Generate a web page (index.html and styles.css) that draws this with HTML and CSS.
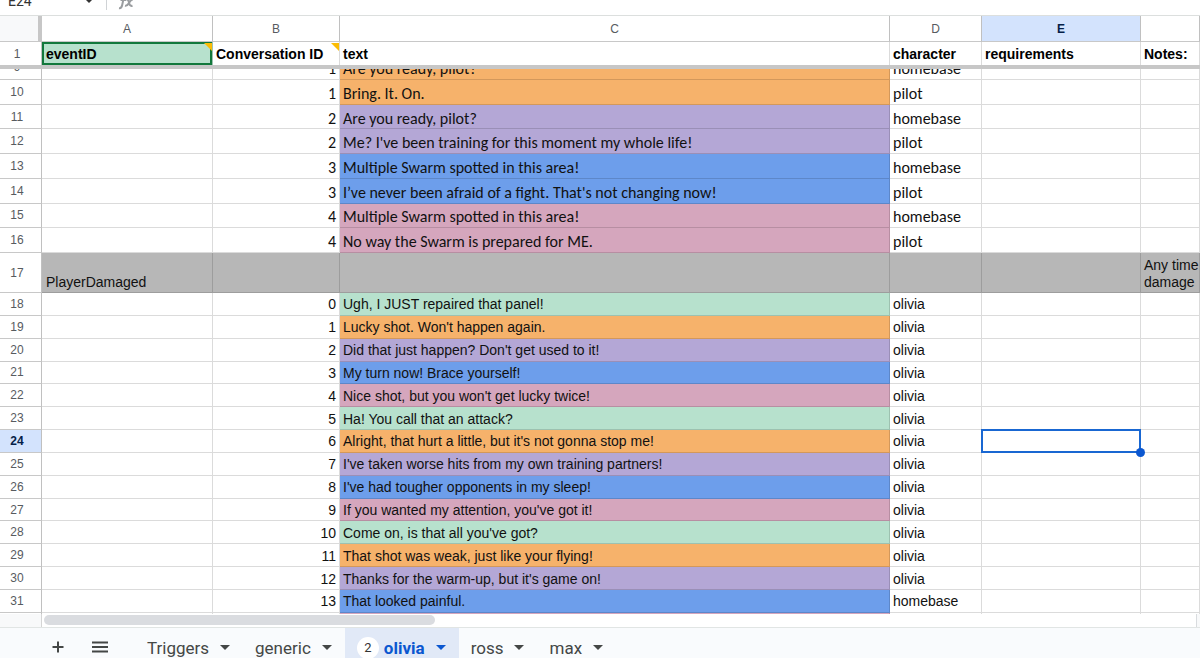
FILE: index.html
```html
<!DOCTYPE html>
<html lang="en">
<head>
<meta charset="utf-8">
<title>Dialogue sheet</title>
<link rel="stylesheet" href="styles.css">
</head>
<body>
<div class="formula-bar">
  <input class="name-box" type="text" value="E24" aria-label="Name box">
  <button class="name-menu" type="button" aria-label="Named ranges"><span class="caret"></span></button>
  <span class="divider"></span>
  <svg class="fx" viewBox="0 0 18 18" aria-hidden="true"><path d="M2 16.200c2.200.3 2.800-1 3.200-3.200L7 4.500C7.400 2.500 8.500 1.700 10.500 2M3.500 8h5.500M9 7.500c2-.5 2.500 1 3 3s1 4 3.500 3.200M16 7.500c-2-.2-3 2-4 3.500S10 14.300 8 13.800"/></svg>
</div>
<main class="sheet">
  <table class="grid frozen">
    <colgroup><col class="c-num"><col class="c-a"><col class="c-b"><col class="c-c"><col class="c-d"><col class="c-e"><col></colgroup>
    <thead>
      <tr class="letters"><th class="corner"></th><th>A</th><th>B</th><th>C</th><th>D</th><th class="active">E</th><th></th></tr>
    </thead>
    <tbody>
      <tr class="titles"><th>1</th><td class="event note">eventID</td><td class="note">Conversation ID</td><td>text</td><td>character</td><td>requirements</td><td>Notes:</td></tr>
    </tbody>
  </table>
  <div class="viewport">
    <table class="grid">
      <colgroup><col class="c-num"><col class="c-a"><col class="c-b"><col class="c-c"><col class="c-d"><col class="c-e"><col></colgroup>
      <tbody class="humanist first">
        <tr class="orange"><th>9</th><td></td><td>1</td><td>Are you ready, pilot?</td><td>homebase</td><td></td><td></td></tr>
      </tbody>
      <tbody class="humanist intro">
        <tr class="orange"><th>10</th><td></td><td>1</td><td>Bring. It. On.</td><td>pilot</td><td></td><td></td></tr>
        <tr class="purple"><th>11</th><td></td><td>2</td><td>Are you ready, pilot?</td><td>homebase</td><td></td><td></td></tr>
        <tr class="purple"><th>12</th><td></td><td>2</td><td>Me? I've been training for this moment my whole life!</td><td>pilot</td><td></td><td></td></tr>
        <tr class="blue"><th>13</th><td></td><td>3</td><td>Multiple Swarm spotted in this area!</td><td>homebase</td><td></td><td></td></tr>
        <tr class="blue"><th>14</th><td></td><td>3</td><td>I’ve never been afraid of a fight. That's not changing now!</td><td>pilot</td><td></td><td></td></tr>
        <tr class="pink"><th>15</th><td></td><td>4</td><td>Multiple Swarm spotted in this area!</td><td>homebase</td><td></td><td></td></tr>
        <tr class="pink"><th>16</th><td></td><td>4</td><td>No way the Swarm is prepared for ME.</td><td>pilot</td><td></td><td></td></tr>
      </tbody>
      <tbody>
        <tr class="section"><th>17</th><td>PlayerDamaged</td><td></td><td></td><td></td><td></td><td>Any time<br>damage</td></tr>
      </tbody>
      <tbody class="hits">
        <tr class="green"><th>18</th><td></td><td>0</td><td>Ugh, I JUST repaired that panel!</td><td>olivia</td><td></td><td></td></tr>
        <tr class="orange"><th>19</th><td></td><td>1</td><td>Lucky shot. Won't happen again.</td><td>olivia</td><td></td><td></td></tr>
        <tr class="purple"><th>20</th><td></td><td>2</td><td>Did that just happen? Don't get used to it!</td><td>olivia</td><td></td><td></td></tr>
        <tr class="blue"><th>21</th><td></td><td>3</td><td>My turn now! Brace yourself!</td><td>olivia</td><td></td><td></td></tr>
        <tr class="pink"><th>22</th><td></td><td>4</td><td>Nice shot, but you won't get lucky twice!</td><td>olivia</td><td></td><td></td></tr>
        <tr class="green"><th>23</th><td></td><td>5</td><td>Ha! You call that an attack?</td><td>olivia</td><td></td><td></td></tr>
        <tr class="orange"><th class="active">24</th><td></td><td>6</td><td>Alright, that hurt a little, but it's not gonna stop me!</td><td>olivia</td><td class="selected"></td><td></td></tr>
        <tr class="purple"><th>25</th><td></td><td>7</td><td>I've taken worse hits from my own training partners!</td><td>olivia</td><td></td><td></td></tr>
        <tr class="blue"><th>26</th><td></td><td>8</td><td>I've had tougher opponents in my sleep!</td><td>olivia</td><td></td><td></td></tr>
        <tr class="pink"><th>27</th><td></td><td>9</td><td>If you wanted my attention, you've got it!</td><td>olivia</td><td></td><td></td></tr>
        <tr class="green"><th>28</th><td></td><td>10</td><td>Come on, is that all you've got?</td><td>olivia</td><td></td><td></td></tr>
        <tr class="orange"><th>29</th><td></td><td>11</td><td>That shot was weak, just like your flying!</td><td>olivia</td><td></td><td></td></tr>
        <tr class="purple"><th>30</th><td></td><td>12</td><td>Thanks for the warm-up, but it's game on!</td><td>olivia</td><td></td><td></td></tr>
        <tr class="blue"><th>31</th><td></td><td>13</td><td>That looked painful.</td><td>homebase</td><td></td><td></td></tr>
      </tbody>
      <tbody>
        <tr class="pink next"><th></th><td></td><td></td><td></td><td></td><td></td><td></td></tr>
      </tbody>
    </table>
  </div>
  <div class="scroll-row">
    <div class="scroll-corner"></div>
    <div class="track"><div class="thumb"></div></div>
    <div class="scroll-end"></div>
  </div>
</main>
<nav class="tabs" aria-label="Sheets">
  <button class="tool" type="button" aria-label="Add sheet"><svg viewBox="0 0 18 18"><path d="M9 3.500v11M3.500 9h11"/></svg></button>
  <button class="tool" type="button" aria-label="All sheets"><svg viewBox="0 0 18 18"><path d="M1 4.500h16M1 9h16M1 13.500h16"/></svg></button>
  <div class="tab-list">
    <button class="tab" type="button">Triggers<span class="caret"></span></button>
    <button class="tab" type="button">generic<span class="caret"></span></button>
    <button class="tab current" type="button"><span class="count">2</span>olivia<span class="caret"></span></button>
    <button class="tab" type="button">ross<span class="caret"></span></button>
    <button class="tab" type="button">max<span class="caret"></span></button>
  </div>
</nav>
</body>
</html>
```
FILE: styles.css
```css
* { box-sizing: border-box; }

body {
  margin: 0;
  height: 100vh;
  display: flex;
  flex-direction: column;
  overflow: hidden;
  background: #fff;
  color: #111;
  font-family: "Liberation Sans", Arial, sans-serif;
  font-size: 14px;
}

button {
  border: 0;
  padding: 0;
  background: none;
  color: inherit;
  font: inherit;
}

.caret {
  width: 0;
  height: 0;
  border: 5px solid transparent;
  border-top-color: currentColor;
  border-bottom: 0;
}

/* Formula bar, scrolled mostly out of view */
.formula-bar {
  height: 15px;
  flex: none;
  display: flex;
  align-items: flex-end;
  padding-bottom: 5px;
  overflow: hidden;
  color: #333;
}
.name-box {
  width: 78px;
  height: 18px;
  border: 0;
  padding: 0 0 0 8px;
  background: none;
  color: #333;
  font: 14px/18px Roboto, sans-serif;
}
.name-menu { width: 22px; height: 20px; display: flex; justify-content: center; align-items: center; }
.divider { width: 1px; height: 20px; margin-left: 6px; background: #d0d3d6; }
.fx { width: 18px; height: 18px; margin-left: 10px; flex: none; }
.fx path { fill: none; stroke: #9a9da0; stroke-width: 2; }

/* Grid */
.sheet { flex: 1; min-height: 0; display: flex; flex-direction: column; }
.grid { width: 100%; table-layout: fixed; border-collapse: separate; border-spacing: 0; }
.c-num { width: 42px; }
.c-a { width: 171px; }
.c-b { width: 127px; }
.c-c { width: 550px; }
.c-d { width: 92px; }
.c-e { width: 159px; }

.grid td {
  padding: 2px 4px 0 3px;
  border-right: 1px solid rgba(0, 0, 0, 0.14);
  border-bottom: 1px solid rgba(0, 0, 0, 0.14);
  line-height: 17px;
  white-space: nowrap;
  overflow: hidden;
}
.grid th {
  padding: 0;
  border-right: 1px solid #c0c0c0;
  border-bottom: 1px solid #c8c8c8;
  color: #575b5f;
  font-size: 12px;
  font-weight: 400;
  line-height: 14px;
}
.grid tbody th { padding-right: 7px; }
.grid th.active { background: #d3e3fd; color: #041e49; font-weight: 700; }
.grid td:nth-child(2) { padding-left: 4px; }

.frozen { flex: none; border-top: 1px solid #dcdfde; border-bottom: 4px solid #c7c7c7; }
.letters th { height: 26px; }
.grid .corner { background: #f8f9fa; border-right: 4px solid #c7c7c7; }
.titles th, .titles td { height: 23px; border-bottom: 0; }
.titles td { position: relative; color: #000; font-weight: 700; }
.grid .event { background: #b7e1cd; box-shadow: inset 0 0 0 2px #12783c; }
.note::after {
  content: "";
  position: absolute;
  top: 1px;
  right: 0;
  border-top: 8px solid #fbbc04;
  border-left: 8px solid transparent;
}

.viewport { flex: 1; min-height: 0; overflow: hidden; }
.viewport .grid { margin-top: -14px; }
.viewport td:nth-child(3) { text-align: right; padding-right: 3px; }
.first tr { height: 25px; }
.intro { height: 173px; }
.hits { height: 320px; }
.humanist td { padding-top: 3px; font-family: Carlito, "Open Sans", sans-serif; font-size: 16px; }

.green td:nth-child(4) { background: #b7e1cd; }
.orange td:nth-child(4) { background: #f6b26b; }
.purple td:nth-child(4) { background: #b4a7d6; }
.blue td:nth-child(4) { background: #6d9eeb; }
.pink td:nth-child(4) { background: #d5a6bd; }
.grid .section td { height: 40px; background: #b7b7b7; vertical-align: bottom; padding-bottom: 1px; }
.next { height: 20px; }

.grid .selected { position: relative; overflow: visible; }
.selected::before {
  content: "";
  position: absolute;
  inset: -1px;
  border: 2px solid #1967d2;
}
.selected::after {
  content: "";
  position: absolute;
  right: -5px;
  bottom: -5px;
  width: 9px;
  height: 9px;
  border-radius: 50%;
  background: #0b57d0;
}

/* Horizontal scrollbar */
.scroll-row { flex: none; height: 14px; display: flex; border-bottom: 1px solid #e1e5e4; }
.scroll-corner { width: 42px; background: #f8f9fa; border-right: 1px solid #d5d5d5; }
.track { flex: 1; padding: 1px 2px; }
.thumb { width: 34%; height: 10px; border-radius: 5px; background: #dadce0; }
.scroll-end { width: 4px; background: #f8f9fa; border-left: 1px solid #d9dcdf; }

/* Sheet tabs */
.tabs {
  flex: none;
  height: 30px;
  display: flex;
  padding-left: 37px;
  background: #f9fbfd;
  color: #444746;
  font: 400 17px/20px Roboto, sans-serif;
  overflow: hidden;
}
.tool { width: 42px; display: flex; justify-content: center; align-items: center; padding-top: 8px; }
.tool svg { width: 18px; height: 18px; fill: none; stroke: #444746; stroke-width: 2; }
.tab-list { display: flex; margin-left: 14px; }
.tab { display: flex; align-items: center; padding: 9px 13px 0 12px; }
.tab .caret { margin-left: 11px; }
.current { background: #e1e9f7; color: #0b57d0; font-weight: 700; }
.count {
  width: 22px;
  height: 22px;
  margin-right: 5px;
  border-radius: 50%;
  background: #fff;
  color: #333;
  font-size: 13px;
  font-weight: 400;
  line-height: 22px;
}
```
